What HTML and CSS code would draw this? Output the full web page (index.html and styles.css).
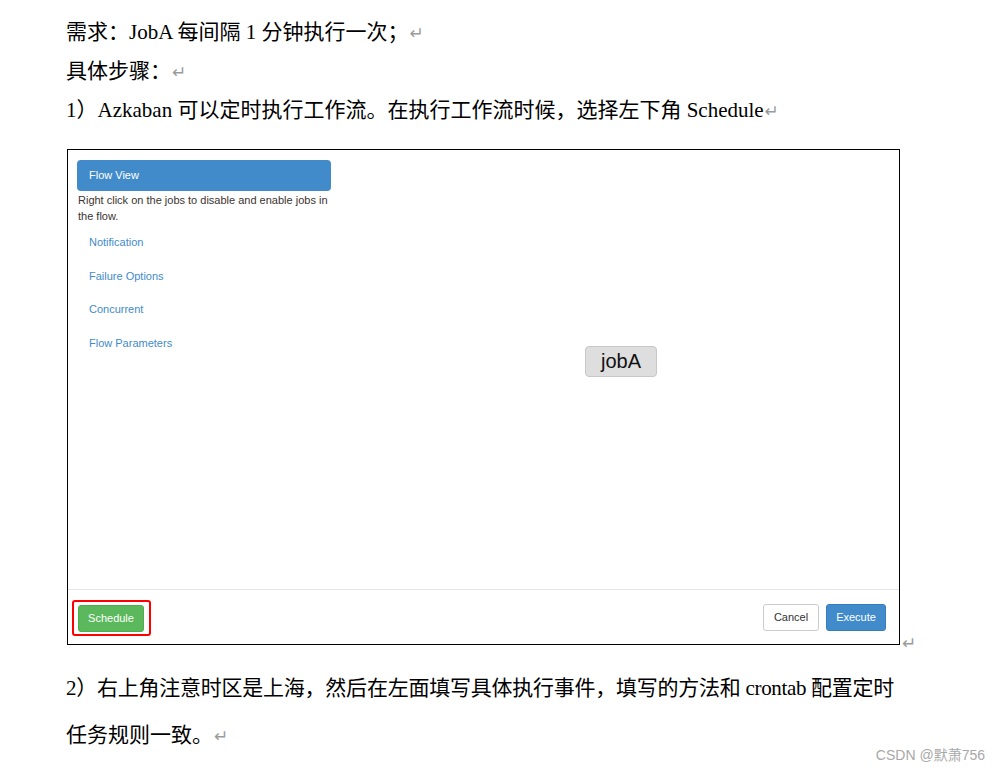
FILE: index.html
```html
<!DOCTYPE html>
<html lang="zh-CN">
<head>
<meta charset="utf-8">
<title>Azkaban Schedule</title>
<link rel="stylesheet" href="styles.css">
</head>
<body>
<div class="doc">
  <p class="line">需求：JobA 每间隔 1 分钟执行一次；<span class="ret">↵</span></p>
  <p class="line">具体步骤：<span class="ret">↵</span></p>
  <p class="line">1）Azkaban 可以定时执行工作流。在执行工作流时候，选择左下角 Schedule<span class="ret">↵</span></p>

  <div class="figure-row">
    <div class="shot">
      <div class="shot-body">
        <div class="sidebar">
          <div class="pill-active">Flow View</div>
          <p class="hint">Right click on the jobs to disable and enable jobs in the flow.</p>
          <ul class="pills">
            <li>Notification</li>
            <li>Failure Options</li>
            <li>Concurrent</li>
            <li>Flow Parameters</li>
          </ul>
        </div>
        <div class="canvas">
          <div class="node">jobA</div>
        </div>
      </div>
      <div class="shot-footer">
        <div class="highlight"><span class="btn btn-green">Schedule</span></div>
        <div class="right-btns">
          <span class="btn btn-default">Cancel</span>
          <span class="btn btn-blue">Execute</span>
        </div>
      </div>
    </div>
    <span class="ret ret-fig">↵</span>
  </div>

  <p class="line2 justify">2）右上角注意时区是上海，然后在左面填写具体执行事件，填写的方法和 crontab 配置定时</p>
  <p class="line2">任务规则一致。<span class="ret">↵</span></p>
</div>
<div class="watermark">CSDN @默萧756</div>
</body>
</html>
```

FILE: styles.css
```css
html, body {
  margin: 0;
  padding: 0;
  background: #ffffff;
}
body {
  width: 1001px;
  height: 772px;
  position: relative;
  overflow: hidden;
}
.doc {
  padding: 13px 0 0 66px;
  font-family: "Liberation Serif", "Noto Sans CJK SC", serif;
  font-size: 21px;
  color: #000;
}
.line {
  margin: 0;
  height: 39px;
  line-height: 39px;
  white-space: nowrap;
}
.ret {
  color: #9a9a9a;
  font-family: "DejaVu Sans", sans-serif;
  font-size: 17px;
  margin-left: 1px;
  letter-spacing: 0;
}
.figure-row {
  display: flex;
  align-items: flex-end;
  margin-top: 19px;
  margin-left: 1px;
}
.shot {
  width: 831px;
  height: 494px;
  border: 1px solid #000;
  display: flex;
  flex-direction: column;
  font-family: "Liberation Sans", Arial, sans-serif;
  font-size: 11px;
}
.ret-fig {
  margin-left: 2px;
  line-height: 12px;
  margin-bottom: -4px;
}
.shot-body {
  height: 439px;
  display: flex;
  border-bottom: 1px solid #e5e5e5;
}
.sidebar {
  width: 254px;
  padding: 10px 0 0 9px;
}
.pill-active {
  height: 31px;
  line-height: 31px;
  background: #428bca;
  color: #fff;
  border-radius: 4px;
  padding-left: 12px;
}
.hint {
  margin: 1px 0 0 1px;
  color: #3b3330;
  line-height: 16px;
  width: 256px;
}
.pills {
  list-style: none;
  margin: 0;
  padding: 2px 0 0 12px;
}
.pills li {
  color: #428bca;
  height: 33.5px;
  line-height: 33.5px;
}
.canvas {
  flex: 1;
  position: relative;
}
.node {
  position: absolute;
  left: 254px;
  top: 196px;
  width: 70px;
  height: 29px;
  line-height: 29px;
  text-align: center;
  background: #dedede;
  border: 1px solid #c8c8c8;
  border-radius: 4px;
  font-size: 20px;
  color: #111;
}
.shot-footer {
  height: 54px;
  display: flex;
  align-items: center;
  justify-content: space-between;
  padding: 1px 13px 0 4px;
  box-sizing: border-box;
}
.highlight {
  border: 2px solid #ff0000;
  border-radius: 3px;
  padding: 3px 5px 2px 4px;
  display: flex;
}
.right-btns {
  display: flex;
  gap: 7px;
}
.btn {
  display: inline-block;
  height: 27px;
  box-sizing: border-box;
  border-radius: 3px;
  text-align: center;
  font-size: 11px;
  line-height: 25px;
}
.btn-green {
  width: 66px;
  background: #5cb85c;
  color: #fff;
  border: 1px solid #4cae4c;
}
.btn-default {
  width: 56px;
  background: #fff;
  color: #333;
  border: 1px solid #ccc;
}
.btn-blue {
  width: 60px;
  background: #428bca;
  color: #fff;
  border: 1px solid #357ebd;
}
.line2 {
  margin: 0;
  height: 47px;
  line-height: 47px;
  white-space: nowrap;
}
.justify {
  width: 828px;
  letter-spacing: -0.35px;
  text-align: justify;
  text-align-last: justify;
  margin-top: 20px;
}
.watermark {
  position: absolute;
  right: 16px;
  bottom: 8px;
  font-family: "Liberation Sans", "Noto Sans CJK SC", sans-serif;
  font-size: 14px;
  color: #a8a8a8;
}
```
